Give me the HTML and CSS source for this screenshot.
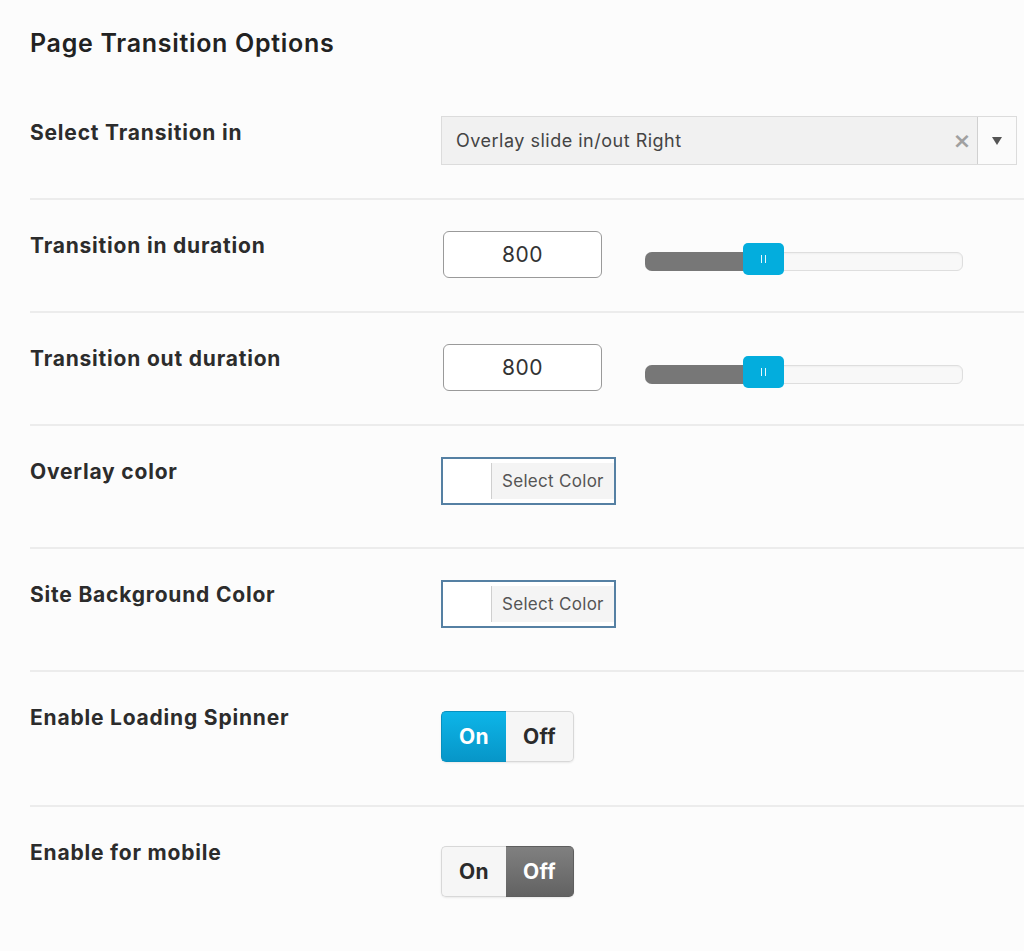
FILE: index.html
```html
<!DOCTYPE html>
<html>
<head>
<meta charset="utf-8">
<link rel="stylesheet" href="styles.css">
</head>
<body>
<div class="page">
  <h1 class="title">Page Transition Options</h1>
  <div class="rows">
    <div class="row">
      <div class="label">Select Transition in</div>
      <div class="control">
        <div class="select">
          <div class="select-value">Overlay slide in/out Right</div>
          <div class="select-clear">×</div>
          <div class="select-arrow"><span class="caret"></span></div>
        </div>
      </div>
    </div>
    <div class="row sep">
      <div class="label">Transition in duration</div>
      <div class="control slider-ctrl">
        <div class="num">800</div>
        <div class="track">
          <div class="fill" style="width:100px"></div>
          <div class="handle" style="left:97px"><span class="grip"></span><span class="grip"></span></div>
        </div>
      </div>
    </div>
    <div class="row sep">
      <div class="label">Transition out duration</div>
      <div class="control slider-ctrl">
        <div class="num">800</div>
        <div class="track">
          <div class="fill" style="width:100px"></div>
          <div class="handle" style="left:97px"><span class="grip"></span><span class="grip"></span></div>
        </div>
      </div>
    </div>
    <div class="row sep row-color">
      <div class="label">Overlay color</div>
      <div class="control">
        <div class="color">
          <div class="swatch"></div>
          <div class="color-btn">Select Color</div>
        </div>
      </div>
    </div>
    <div class="row sep row-color">
      <div class="label">Site Background Color</div>
      <div class="control">
        <div class="color">
          <div class="swatch"></div>
          <div class="color-btn">Select Color</div>
        </div>
      </div>
    </div>
    <div class="row sep row-toggle">
      <div class="label">Enable Loading Spinner</div>
      <div class="control">
        <div class="toggle">
          <div class="seg on active-blue">On</div>
          <div class="seg off">Off</div>
        </div>
      </div>
    </div>
    <div class="row sep row-toggle">
      <div class="label">Enable for mobile</div>
      <div class="control">
        <div class="toggle">
          <div class="seg on">On</div>
          <div class="seg off active-gray">Off</div>
        </div>
      </div>
    </div>
  </div>
</div>
</body>
</html>
```
FILE: styles.css
```css
html, body {
  margin: 0;
  padding: 0;
  background: #fcfcfc;
}
body {
  font-family: Inter, "Liberation Sans", sans-serif;
  color: #2b2b2b;
  width: 1024px;
  height: 951px;
  overflow: hidden;
}
.page {
  padding-left: 30px;
}
.title {
  margin: 0;
  padding-top: 28px;
  font-size: 25px;
  line-height: 30px;
  font-weight: 600;
  color: #222;
  letter-spacing: 0.7px;
}
.rows {
  margin-top: 28px;
}
.row {
  display: grid;
  grid-template-columns: 411px 1fr;
  align-items: start;
  padding: 32px 0 33px;
}
.row.sep {
  border-top: 2px solid #ececec;
  padding-top: 31px;
}
.row-color {
  padding-bottom: 42px;
}
.row-toggle {
  padding-bottom: 43px;
}
.label {
  font-size: 21px;
  line-height: 24px;
  font-weight: 700;
  color: #2c2c2c;
  padding-top: 3px;
  letter-spacing: 0.8px;
}
.control {
  display: flex;
  align-items: flex-start;
}

/* select */
.select {
  width: 576px;
  height: 49px;
  box-sizing: border-box;
  border: 1px solid #dcdcdc;
  background: #f1f1f1;
  display: flex;
  align-items: center;
  margin-top: -2px;
}
.select-value {
  flex: 1;
  padding-left: 14px;
  font-size: 18px;
  letter-spacing: 0.5px;
  color: #444;
}
.select-clear {
  width: 30px;
  font-size: 22px;
  font-weight: 700;
  color: #a0a0a0;
  text-align: center;
  font-family: "DejaVu Sans", sans-serif;
  line-height: 20px;
}
.select-arrow {
  width: 38px;
  height: 100%;
  border-left: 1px solid #d0d0d0;
  background: #fbfbfb;
  display: flex;
  align-items: center;
  justify-content: center;
}
.caret {
  width: 0;
  height: 0;
  border-left: 5px solid transparent;
  border-right: 5px solid transparent;
  border-top: 8px solid #555;
}

/* number + slider */
.slider-ctrl {
  padding-left: 2px;
}
.num {
  width: 159px;
  height: 47px;
  box-sizing: border-box;
  border: 1px solid #9a9a9a;
  border-radius: 6px;
  background: #fff;
  font-size: 21px;
  letter-spacing: 0.5px;
  color: #333;
  display: flex;
  align-items: center;
  justify-content: center;
}
.track {
  position: relative;
  margin-left: 43px;
  margin-top: 21px;
  width: 318px;
  height: 19px;
  box-sizing: border-box;
  border: 1px solid #dedede;
  border-radius: 6px;
  background: #f8f8f8;
  box-shadow: inset 0 1px 2px rgba(0,0,0,0.04);
}
.fill {
  position: absolute;
  left: -1px;
  top: -1px;
  bottom: -1px;
  background: #777;
  border-radius: 7px 0 0 7px;
}
.handle {
  position: absolute;
  top: -10px;
  width: 41px;
  height: 32px;
  box-sizing: border-box;
  background: #03addd;
  border-radius: 5px;
  display: flex;
  align-items: center;
  justify-content: center;
  gap: 3px;
}
.grip {
  width: 1px;
  height: 8px;
  background: #e8f7fc;
}

/* color picker */
.color {
  display: flex;
  width: 175px;
  height: 48px;
  box-sizing: border-box;
  border: 2px solid #5580a3;
  background: #fff;
}
.swatch {
  width: 48px;
  background: #fff;
  border-right: 1px solid #cfcfcf;
  margin: 4px 0;
}
.color-btn {
  flex: 1;
  background: #f4f4f4;
  font-size: 17px;
  letter-spacing: 0.3px;
  color: #555;
  display: flex;
  align-items: center;
  padding-left: 10px;
  margin: 4px 0;
}

/* toggle */
.toggle {
  display: flex;
  margin-top: 8px;
  height: 51px;
  border-radius: 5px;
  box-shadow: 0 1px 2px rgba(0,0,0,0.08);
}
.seg {
  display: flex;
  align-items: center;
  justify-content: center;
  font-size: 21px;
  font-weight: 700;
  letter-spacing: 0.3px;
  color: #2b2b2b;
  box-sizing: border-box;
  background: #f6f6f6;
  border: 1px solid #d8d8d8;
}
.seg.on {
  width: 65px;
  border-radius: 5px 0 0 5px;
  border-right: none;
}
.seg.off {
  width: 68px;
  border-radius: 0 5px 5px 0;
  border-left: none;
}
.active-blue {
  background: linear-gradient(#0db5e8, #0796c8);
  color: #fff;
  border-color: #0790bf;
}
.active-gray {
  background: linear-gradient(#808080, #626262);
  color: #fff;
  border-color: #5e5e5e;
}
```
